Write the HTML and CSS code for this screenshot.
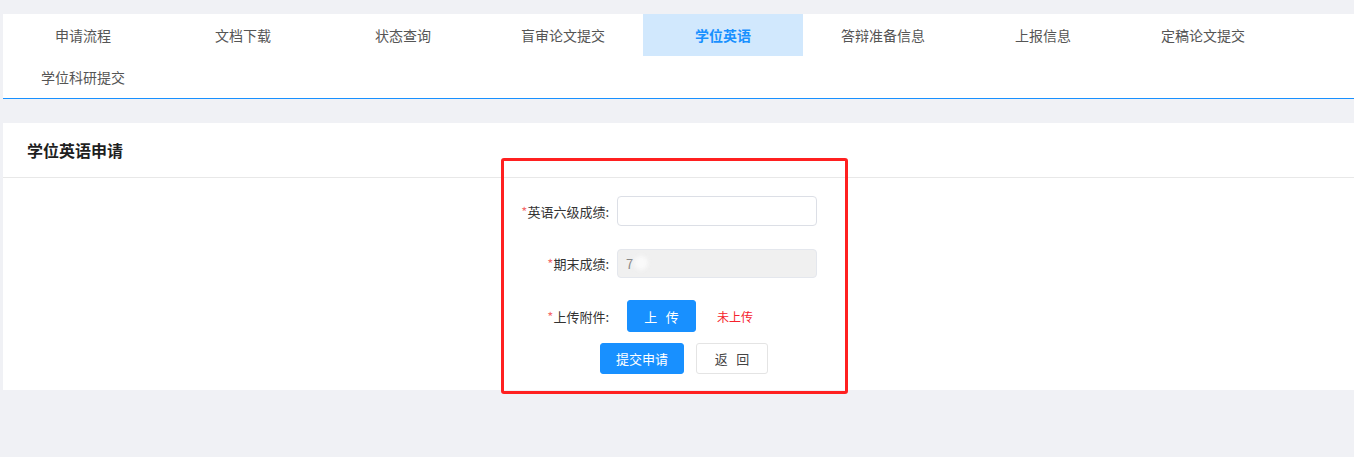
FILE: index.html
```html
<!DOCTYPE html>
<html lang="zh-CN">
<head>
<meta charset="utf-8">
<title>学位英语申请</title>
<link rel="stylesheet" href="styles.css">
</head>
<body>
<div class="page">
  <nav class="tabs">
    <a class="tab">申请流程</a>
    <a class="tab">文档下载</a>
    <a class="tab">状态查询</a>
    <a class="tab">盲审论文提交</a>
    <a class="tab active">学位英语</a>
    <a class="tab">答辩准备信息</a>
    <a class="tab">上报信息</a>
    <a class="tab">定稿论文提交</a>
    <a class="tab">学位科研提交</a>
  </nav>

  <section class="card">
    <div class="card-header">学位英语申请</div>
    <div class="card-body">
      <form class="form">
        <div class="row">
          <label class="label"><span class="req">*</span>英语六级成绩:</label>
          <input class="input" type="text">
        </div>
        <div class="row">
          <label class="label"><span class="req">*</span>期末成绩:</label>
          <div class="input disabled"><span class="val">7</span><span class="blur"></span></div>
        </div>
        <div class="row row-upload">
          <label class="label"><span class="req">*</span>上传附件:</label>
          <button type="button" class="btn btn-primary btn-upload">上&nbsp;&nbsp;&nbsp;传</button>
          <span class="status">未上传</span>
        </div>
        <div class="actions">
          <button type="button" class="btn btn-primary btn-submit">提交申请</button>
          <button type="button" class="btn btn-default btn-back">返&nbsp;&nbsp;&nbsp;回</button>
        </div>
      </form>
      <div class="highlight"></div>
    </div>
  </section>
</div>
</body>
</html>
```

FILE: styles.css
```css
* { box-sizing: border-box; }
html, body { margin: 0; padding: 0; }
body {
  background: #f0f1f5;
  font-family: "Noto Sans CJK SC", "Microsoft YaHei", sans-serif;
  color: #303133;
  width: 1354px;
  height: 457px;
  overflow: hidden;
}
.page {
  padding: 14px 0 0 3px;
}
.tabs {
  display: flex;
  flex-wrap: wrap;
  background: #fff;
  border-bottom: 1px solid #1890ff;
}
.tab {
  width: 160px;
  height: 42px;
  display: flex;
  align-items: center;
  justify-content: center;
  font-size: 14px;
  color: #555;
  cursor: pointer;
}
.tab.active {
  background: #d1e8fd;
  color: #1890ff;
  font-weight: bold;
}
.card {
  margin-top: 24px;
  background: #fff;
  height: 267px;
}
.card-header {
  height: 55px;
  padding-left: 24px;
  display: flex;
  align-items: center;
  font-size: 16px;
  font-weight: bold;
  color: #1f1f1f;
  border-bottom: 1px solid #e8e8e8;
}
.card-body {
  position: relative;
  padding-top: 18px;
}
.form {
  margin-left: 494px;
  width: 330px;
}
.row {
  display: flex;
  align-items: center;
  height: 30px;
  margin-bottom: 22px;
}
.label {
  width: 120px;
  padding-right: 8px;
  text-align: right;
  font-size: 13px;
  color: #333;
  white-space: nowrap;
}
.req {
  color: #f56c6c;
}
.input {
  width: 200px;
  height: 30px;
  border: 1px solid #dcdfe6;
  border-radius: 4px;
  background: #fff;
  font: inherit;
  font-size: 13px;
  padding: 0 8px;
  outline: none;
}
.input.disabled {
  height: 29px;
  background: #f0f0f0;
  border-color: #e4e7ed;
  display: flex;
  align-items: center;
  color: #888;
}
.blur {
  display: inline-block;
  width: 14px;
  height: 14px;
  margin-left: 1px;
  background: #fafafa;
  border-radius: 50%;
  filter: blur(2px);
}
.row-upload {
  height: 32px;
  margin-bottom: 11px;
}
.btn {
  font-family: inherit;
  font-size: 13px;
  border-radius: 3px;
  cursor: pointer;
  padding: 0;
}
.btn-primary {
  background: #1890ff;
  border: 1px solid #1890ff;
  color: #fff;
}
.btn-default {
  background: #fff;
  border: 1px solid #e4e4e4;
  color: #444;
}
.btn-upload {
  width: 69px;
  height: 32px;
  margin-left: 10px;
}
.status {
  margin-left: 21px;
  font-size: 12px;
  color: #f5222d;
}
.actions {
  display: flex;
  gap: 12px;
  margin-left: 103px;
}
.btn-submit {
  width: 84px;
  height: 31px;
}
.btn-back {
  width: 72px;
  height: 31px;
}
.highlight {
  position: absolute;
  left: 498px;
  top: -20px;
  width: 347px;
  height: 236px;
  border: 3px solid #ff2020;
  border-radius: 3px;
  pointer-events: none;
}
```
